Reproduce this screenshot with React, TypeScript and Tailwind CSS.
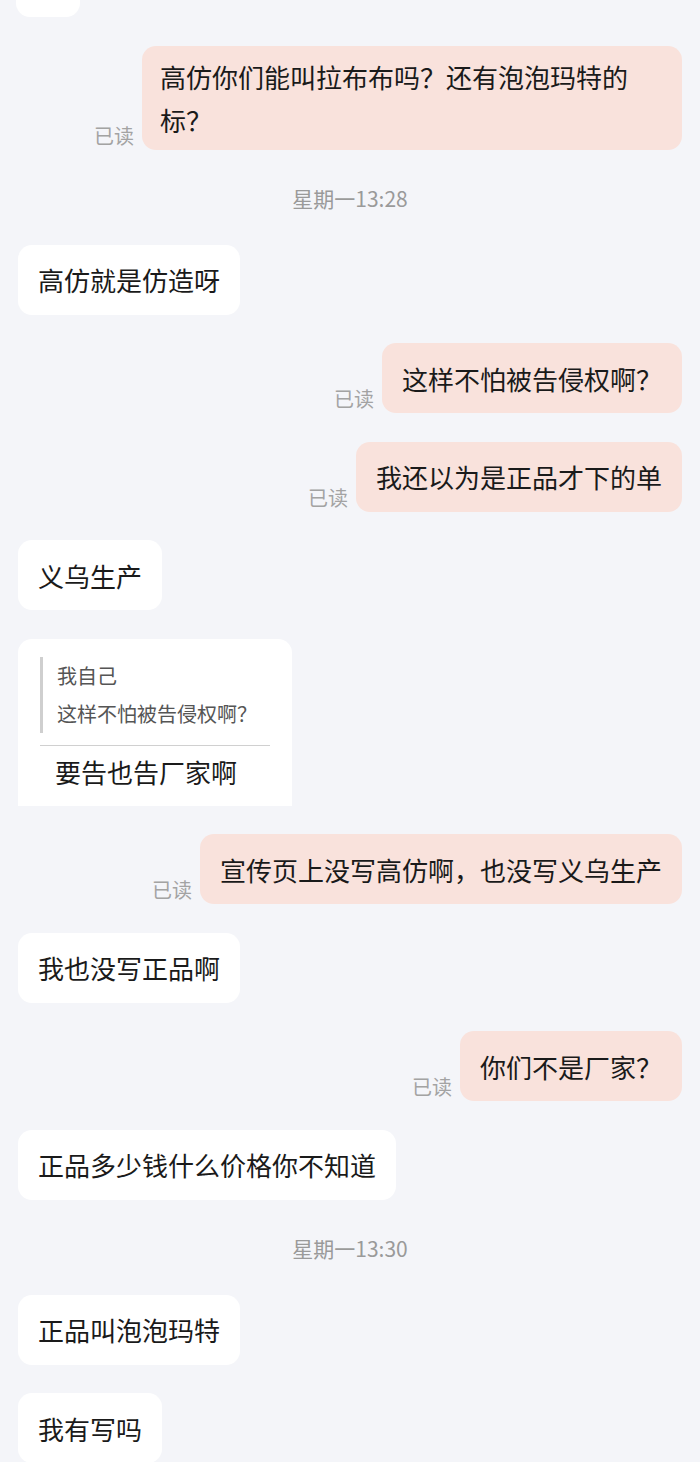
import { ReactNode } from "react";

const font = "font-['Noto_Sans_CJK_SC','Noto_Sans',sans-serif]";

function Incoming({ children }: { children: ReactNode }) {
    return (
        <div className="flex justify-start pl-[18px]">
            <div className="flex h-[70px] items-center rounded-[14px] bg-white px-[20px] text-[26px] text-[#1a1a1a]">
                {children}
            </div>
        </div>
    );
}

function Outgoing({ children, tall = false }: { children: ReactNode; tall?: boolean }) {
    return (
        <div className="flex items-end justify-end gap-[8px] pr-[18px]">
            <span className="text-[20px] leading-[28px] text-[#a3a3a3]">已读</span>
            <div
                className={
                    tall
                        ? "w-[540px] rounded-[14px] bg-[#f9e2dc] px-[18px] py-[9px] text-[26px] leading-[43px] text-[#1a1a1a]"
                        : "flex h-[70px] items-center rounded-[14px] bg-[#f9e2dc] px-[20px] text-[26px] text-[#1a1a1a]"
                }
            >
                {children}
            </div>
        </div>
    );
}

function Stamp({ time }: { time: string }) {
    return (
        <div className="flex h-[38px] items-center justify-center pt-[3px] text-[21px] text-[#9a9a9a]">{time}</div>
    );
}

export default function App() {
    return (
        <div className={`h-[1462px] w-[700px] overflow-hidden bg-[#f4f5f9] ${font}`}>
            <div className="flex flex-col gap-[28.5px]">
                <div className="pl-[16px]">
                    <div className="h-[17px] w-[64px] rounded-b-[14px] bg-white" />
                </div>

                <Outgoing tall>
                    高仿你们能叫拉布布吗？还有泡泡玛特的
                    <br />
                    标？
                </Outgoing>

                <Stamp time="星期一13:28" />

                <Incoming>高仿就是仿造呀</Incoming>
                <Outgoing>这样不怕被告侵权啊？</Outgoing>
                <Outgoing>我还以为是正品才下的单</Outgoing>
                <Incoming>义乌生产</Incoming>

                <div className="flex pl-[18px]">
                    <div className="h-[167px] w-[274px] rounded-t-[14px] bg-white px-[22px] pt-[18px]">
                        <div className="border-l-[3px] border-[#cfcfcf] pl-[14px] text-[20px] leading-[38px] text-[#555]">
                            <div>我自己</div>
                            <div>这样不怕被告侵权啊？</div>
                        </div>
                        <div className="mt-[12px] w-[230px] border-t border-[#d0d0d0]" />
                        <div className="pt-[6px] pl-[15px] text-[26px] leading-[40px] text-[#1a1a1a]">要告也告厂家啊</div>
                    </div>
                </div>

                <Outgoing>宣传页上没写高仿啊，也没写义乌生产</Outgoing>
                <Incoming>我也没写正品啊</Incoming>
                <Outgoing>你们不是厂家？</Outgoing>
                <Incoming>正品多少钱什么价格你不知道</Incoming>

                <Stamp time="星期一13:30" />

                <Incoming>正品叫泡泡玛特</Incoming>
                <Incoming>我有写吗</Incoming>
            </div>
        </div>
    );
}
